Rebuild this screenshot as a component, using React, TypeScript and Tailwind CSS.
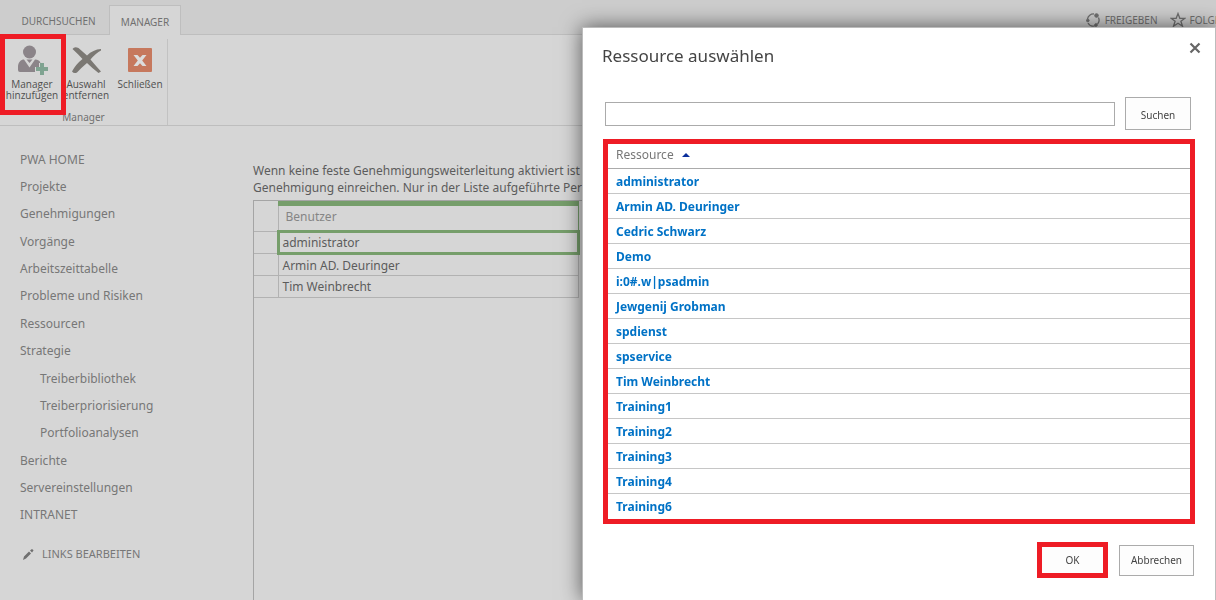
import type { ReactNode } from "react";

const navItems = [
  { label: "PWA HOME" },
  { label: "Projekte" },
  { label: "Genehmigungen" },
  { label: "Vorgänge" },
  { label: "Arbeitszeittabelle" },
  { label: "Probleme und Risiken" },
  { label: "Ressourcen" },
  { label: "Strategie" },
  { label: "Treiberbibliothek", nested: true },
  { label: "Treiberpriorisierung", nested: true },
  { label: "Portfolioanalysen", nested: true },
  { label: "Berichte" },
  { label: "Servereinstellungen" },
  { label: "INTRANET" },
];

const resources = [
  "administrator",
  "Armin AD. Deuringer",
  "Cedric Schwarz",
  "Demo",
  "i:0#.w|psadmin",
  "Jewgenij Grobman",
  "spdienst",
  "spservice",
  "Tim Weinbrecht",
  "Training1",
  "Training2",
  "Training3",
  "Training4",
  "Training6",
];

function PersonAddIcon() {
  return (
    <svg width="32" height="32" viewBox="0 0 32 32" aria-hidden="true">
      <circle cx="13.500" cy="8" r="6.500" fill="#8b8489" />
      <path d="M2 26V23C2 18 5 15.500 8 15.500L13.500 23.500L19 15.500C22 15.500 24 17 24.500 19H23V23H19V28H4Q2 28 2 26Z" fill="#8b8489" />
      <path d="M10.500 15.500H16.500L13.500 19Z" fill="#8b8489" />
      <path d="M24 19H28V23H32V27H28V31H24V27H20V23H24Z" fill="#7fa391" />
    </svg>
  );
}

function RemoveIcon() {
  return (
    <svg width="32" height="32" viewBox="0 0 32 32" aria-hidden="true">
      <path d="M2.500 5Q4.500 2 8.500 4L17 11.500Q23 5.500 31 5V6.500Q26 9 20.500 15.500Q25 21 31 27.500L28.500 29Q22 24 17 19Q11 24 7 28.500Q4 30 2 27.500Q6 20 12.500 15Q8 10 2.500 5Z" fill="#7b7873" />
    </svg>
  );
}

function CloseBoxIcon() {
  return (
    <svg width="32" height="32" viewBox="0 0 32 32" aria-hidden="true">
      <rect x="4" y="4" width="24" height="24" rx="1" fill="#c6785d" />
      <path d="M9.500 11H13.500L16 13.800L18.500 11H22.500L18.200 16.500L22.500 22H18.500L16 19.200L13.500 22H9.500L13.800 16.500Z" fill="#dcdcdc" />
    </svg>
  );
}

function RibbonButton({ icon, lines }: { icon: ReactNode; lines: string[] }) {
  return (
    <button className="flex flex-col items-center gap-[3px] font-['Open_Sans','Noto_Sans',sans-serif] text-[10px] leading-[11px] whitespace-nowrap text-[#4f4f4f]">
      {icon}
      <span>
        {lines.map((line) => (
          <span key={line} className="block">
            {line}
          </span>
        ))}
      </span>
    </button>
  );
}

function Ribbon() {
  return (
    <header>
      <div className="flex h-[35px] items-end justify-between border-b border-[#bebebe] bg-[#cdcdcd] text-[10px] text-[#707070]">
        <nav className="flex items-end">
          <a href="#durchsuchen" className="flex h-[26px] w-[109px] items-center justify-center pl-2">
            DURCHSUCHEN
          </a>
          <a
            href="#manager"
            className="-mb-px flex h-[30px] w-[72px] items-center justify-center border border-b-0 border-[#bebebe] bg-[#d6d6d6] pt-[3px]"
          >
            MANAGER
          </a>
        </nav>
        <div className="-mr-3 flex h-[28px] items-center gap-3">
          <a href="#freigeben" className="flex items-center gap-1">
            <svg width="16" height="16" viewBox="0 0 16 16" fill="none" stroke="#707070" aria-hidden="true">
              <path d="M2.500 7A6 6 0 0 1 9 2M13.500 5.500A6 6 0 0 1 12.500 12M10.500 13.700A6 6 0 0 1 3 11" strokeWidth="1.300" />
              <circle cx="11.500" cy="3.500" r="1.800" fill="#707070" />
              <circle cx="2.800" cy="8.500" r="1.300" fill="#707070" />
              <circle cx="11" cy="13" r="1.300" fill="#707070" />
            </svg>
            FREIGEBEN
          </a>
          <a href="#folgen" className="flex items-center gap-1">
            <svg width="16" height="16" viewBox="0 0 16 16" fill="none" stroke="#707070" aria-hidden="true">
              <path d="M8 1.500L9.800 6.300H15L10.900 9.300L12.500 14.300L8 11.300L3.500 14.300L5.100 9.300L1 6.300H6.200Z" strokeWidth="1.300" />
            </svg>
            FOLGEN
          </a>
        </div>
      </div>
      <div className="flex h-[91px] border-b border-[#bebebe]">
        <div className="mt-1 flex w-[168px] flex-col justify-between border-r border-[#c2c2c2]">
          <div className="relative grid grid-cols-3 items-start pt-[5px] pl-[5px]">
            <RibbonButton icon={<PersonAddIcon />} lines={["Manager", "hinzufügen"]} />
            <RibbonButton icon={<RemoveIcon />} lines={["Auswahl", "entfernen"]} />
            <RibbonButton icon={<CloseBoxIcon />} lines={["Schließen"]} />
            <div className="pointer-events-none absolute -top-[5px] left-0 h-[81px] w-[66px] border-[5px] border-[#ee1c25]" />
          </div>
          <div className="pb-[2px] text-center text-[10px] leading-[11px] text-[#707070]">Manager</div>
        </div>
      </div>
    </header>
  );
}

function Sidebar() {
  return (
    <aside className="w-[253px] shrink-0 pt-5 pl-5 text-[12px] leading-[18px] text-[#777777]">
      <ul className="grid h-[383px] auto-rows-fr items-center">
        {navItems.map((item) => (
          <li key={item.label} className={item.nested ? "pl-5" : ""}>
            <a href="#nav">{item.label}</a>
          </li>
        ))}
      </ul>
      <a href="#links" className="mt-4 flex items-center gap-2 text-[11px]">
        <svg width="14" height="14" viewBox="0 0 14 14" fill="#707070" aria-hidden="true">
          <path d="M3 13L4 9.500L9 4.500L11 6.500L6 11.500ZM10 3.500L11.500 2.300Q13 2 13.500 3.500L12 5.500Z" />
        </svg>
        LINKS BEARBEITEN
      </a>
    </aside>
  );
}

function UserTable() {
  return (
    <main className="flex min-w-0 flex-1 flex-col pt-9 text-[12px] leading-[17px] text-[#5c5c5c]">
      <p className="whitespace-nowrap">
        Wenn keine feste Genehmigungsweiterleitung aktiviert ist
        <br />
        Genehmigung einreichen. Nur in der Liste aufgeführte Personen
      </p>
      <div className="mt-1 flex-1 border-t border-l border-[#a5a5a5]">
        <table className="w-[326px] border-collapse">
          <thead>
            <tr className="h-7">
              <th className="w-6 border-r border-b border-[#b2b2b2]" />
              <th className="border-x border-t-[5px] border-b-[3px] border-[#769e6b] pb-[3px] pl-[7px] text-left font-normal text-[#858585]">
                Benutzer
              </th>
            </tr>
          </thead>
          <tbody>
            <tr className="h-[22px]">
              <td className="border-r border-b border-[#b2b2b2]" />
              <td className="border-[3px] border-[#769e6b] pl-[3px]">administrator</td>
            </tr>
            {["Armin AD. Deuringer", "Tim Weinbrecht"].map((name) => (
              <tr key={name} className="h-[22px]">
                <td className="border-r border-b border-[#b2b2b2]" />
                <td className="border-r border-b border-[#b2b2b2] pl-1">{name}</td>
              </tr>
            ))}
          </tbody>
        </table>
      </div>
    </main>
  );
}

function ResourceDialog() {
  return (
    <section
      role="dialog"
      aria-labelledby="dialog-title"
      className="fixed top-[27px] right-0 bottom-0 w-[634px] max-w-full overflow-y-auto border border-b-0 border-[#bcbcbc] bg-white pr-5 pl-5 text-[#444444] shadow-[0_0_20px_rgba(0,0,0,0.6)]"
    >
      <div className="-ml-px flex items-start justify-between pt-[14px]">
        <h1 id="dialog-title" className="text-[17px] leading-7">
          Ressource auswählen
        </h1>
        <button aria-label="Schließen" className="-mr-[6px]">
          <svg width="12" height="12" viewBox="0 0 12 12" fill="none" stroke="#666" strokeWidth="2.200" aria-hidden="true">
            <path d="M1.500 1.500L10.500 10.500M10.500 1.500L1.500 10.500" />
          </svg>
        </button>
      </div>
      <form className="mt-[27px] flex items-center gap-[10px] pr-1 pl-[2px]" onSubmit={(e) => e.preventDefault()}>
        <input aria-label="Ressource suchen" className="h-6 min-w-0 flex-1 border border-[#ababab] bg-white px-1 text-[12px]" />
        <button className="h-[33px] w-[66px] border border-[#ababab] bg-[#fdfdfd] pt-[3px] text-[10px]">Suchen</button>
      </form>
      <div className="mt-[9px] border-[5px] border-[#ee1c25]">
        <table className="w-full border-collapse text-left text-[12px] leading-[18px]">
          <thead>
            <tr className="h-6 border-b border-[#ababab]">
              <th className="pb-px pl-2 font-normal text-[#777777]">
                <span className="flex items-center gap-2">
                  Ressource
                  <svg width="8" height="4" viewBox="0 0 8 4" aria-hidden="true">
                    <path d="M4 0L8 4H0Z" fill="#0a2f9c" />
                  </svg>
                </span>
              </th>
            </tr>
          </thead>
          <tbody>
            {resources.map((name) => (
              <tr key={name} className="h-[25px] border-b border-[#c6c6c6] last:h-[26px] last:border-b-0">
                <td className="pt-[2px] pl-2 font-bold text-[#0072c6]">
                  <a href="#resource">{name}</a>
                </td>
              </tr>
            ))}
          </tbody>
        </table>
      </div>
      <div className="mt-[18px] flex items-center justify-end gap-[11px] pr-px text-[10px]">
        <button className="h-9 w-[71px] border-[5px] border-[#ee1c25] bg-[#fdfdfd]">OK</button>
        <button className="h-[31px] w-[75px] border border-[#ababab] bg-[#fdfdfd]">Abbrechen</button>
      </div>
    </section>
  );
}

export default function App() {
  return (
    <div className="flex min-h-screen flex-col overflow-hidden bg-[#d6d6d6] font-['Noto_Sans','Open_Sans',sans-serif]">
      <Ribbon />
      <div className="flex flex-1">
        <Sidebar />
        <UserTable />
      </div>
      <ResourceDialog />
    </div>
  );
}
